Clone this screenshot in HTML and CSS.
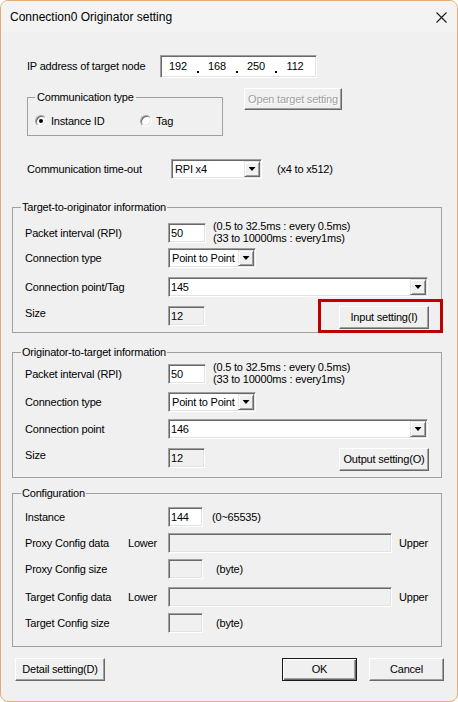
FILE: index.html
```html
<!DOCTYPE html>
<html>
<head>
<meta charset="utf-8">
<title>Connection0 Originator setting</title>
<link rel="stylesheet" href="styles.css">
</head>
<body>
<div class="window">
  <div class="titlebar">
    <span class="title">Connection0 Originator setting</span>
    <svg class="close" width="11" height="11" viewBox="0 0 11 11"><path d="M0.5 0.5L10.5 10.5M10.5 0.5L0.5 10.5" stroke="#1a1a1a" stroke-width="1.1" fill="none"/></svg>
  </div>
  <div class="content">
    <div class="row ip-row">
      <span class="ip-lbl">IP address of target node</span>
      <div class="field ip">
        <span class="oct">192</span><span class="dot"></span>
        <span class="oct">168</span><span class="dot"></span>
        <span class="oct">250</span><span class="dot"></span>
        <span class="oct">112</span>
      </div>
    </div>

    <div class="row ctype-row">
      <div class="group ctype">
        <span class="legend">Communication type</span>
        <div class="radios">
          <span class="radio-item first"><span class="radio checked"></span>Instance ID</span>
          <span class="radio-item"><span class="radio"></span>Tag</span>
        </div>
      </div>
      <div class="btn open-btn">Open target setting</div>
    </div>

    <div class="row timeout-row">
      <span class="timeout-lbl">Communication time-out</span>
      <div class="combo timeout-combo"><span class="val">RPI x4</span><span class="arrow"></span></div>
      <span class="hint">(x4 to x512)</span>
    </div>

    <div class="group info to">
      <span class="legend">Target-to-originator information</span>
      <div class="g-row mt9">
        <span class="g-lbl">Packet interval (RPI)</span>
        <div class="field txt rpi">50</div>
        <div class="notes">(0.5 to 32.5ms : every 0.5ms)<br>(33 to 10000ms : every1ms)</div>
      </div>
      <div class="g-row mt5">
        <span class="g-lbl">Connection type</span>
        <div class="combo sel-ptp"><span class="val">Point to Point</span><span class="arrow"></span></div>
      </div>
      <div class="g-row mt9">
        <span class="g-lbl">Connection point/Tag</span>
        <div class="combo combo-wide"><span class="val">145</span><span class="arrow"></span></div>
      </div>
      <div class="g-row size-row mt9">
        <span class="g-lbl">Size</span>
        <div class="field txt ro size-box">12</div>
        <div class="hl-wrap">
          <div class="btn act-btn">Input setting(I)</div>
          <div class="hl"></div>
        </div>
      </div>
    </div>

    <div class="group info ot">
      <span class="legend">Originator-to-target information</span>
      <div class="g-row mt5">
        <span class="g-lbl">Packet interval (RPI)</span>
        <div class="field txt rpi">50</div>
        <div class="notes">(0.5 to 32.5ms : every 0.5ms)<br>(33 to 10000ms : every1ms)</div>
      </div>
      <div class="g-row mt8">
        <span class="g-lbl">Connection type</span>
        <div class="combo sel-ptp"><span class="val">Point to Point</span><span class="arrow"></span></div>
      </div>
      <div class="g-row mt7">
        <span class="g-lbl">Connection point</span>
        <div class="combo combo-wide"><span class="val">146</span><span class="arrow"></span></div>
      </div>
      <div class="g-row size-row mt9">
        <span class="g-lbl">Size</span>
        <div class="field txt ro size-box">12</div>
        <div class="hl-wrap">
          <div class="btn act-btn">Output setting(O)</div>
        </div>
      </div>
    </div>

    <div class="group info cfg">
      <span class="legend">Configuration</span>
      <div class="g-row mt7">
        <span class="g-lbl">Instance</span>
        <div class="field txt inst">144</div>
        <span class="range">(0~65535)</span>
      </div>
      <div class="g-row mt6">
        <span class="g-lbl cfg-lbl"><span class="main">Proxy Config data</span><span>Lower</span></span>
        <div class="field ro cfg-data"></div>
        <span class="upper">Upper</span>
      </div>
      <div class="g-row mt6">
        <span class="g-lbl">Proxy Config size</span>
        <div class="field ro cfg-size"></div>
        <span class="byte">(byte)</span>
      </div>
      <div class="g-row mt8">
        <span class="g-lbl cfg-lbl"><span class="main">Target Config data</span><span>Lower</span></span>
        <div class="field ro cfg-data"></div>
        <span class="upper">Upper</span>
      </div>
      <div class="g-row mt6">
        <span class="g-lbl">Target Config size</span>
        <div class="field ro cfg-size"></div>
        <span class="byte">(byte)</span>
      </div>
    </div>

    <div class="bottom">
      <div class="btn detail">Detail setting(D)</div>
      <div class="btn default ok">OK</div>
      <div class="btn cancel">Cancel</div>
    </div>
  </div>
</div>
</body>
</html>
```

FILE: styles.css
```css
* { box-sizing: border-box; }
html, body { margin: 0; padding: 0; background: #fff; }
body {
  font-family: "Liberation Sans", Arial, sans-serif;
  font-size: 11px;
  line-height: 13px;
  letter-spacing: -0.2px;
  color: #000;
}
.window {
  width: 458px;
  height: 702px;
  border: 1px solid #e5ab73;
  border-radius: 8px;
  overflow: hidden;
  background: #f0f0f0;
}
.titlebar {
  height: 31px;
  background: #f3f3f3;
  display: flex;
  align-items: center;
  justify-content: space-between;
  padding: 0 10px 0 9px;
}
.title { font-size: 12px; letter-spacing: 0; line-height: 16px; margin-top: 1px; }
.close { display: block; margin-top: 1px; }

.content { display: flex; flex-direction: column; align-items: flex-start; }
.row { display: flex; align-items: center; }

/* sunken 3D edit field */
.field {
  background: #fff;
  border: 1px solid;
  border-color: #a0a0a0 #fff #fff #a0a0a0;
  box-shadow: inset 1px 1px 0 #696969, inset -1px -1px 0 #e3e3e3;
}
.ro { background: #f0f0f0; }

.ip-row { margin: 23px 0 0 26px; }
.ip-lbl { width: 133px; }
.ip { width: 157px; height: 23px; display: flex; align-items: stretch; padding-left: 3px; }
.oct { width: 28px; display: flex; align-items: center; justify-content: center; }
.dot { width: 11px; display: flex; align-items: flex-end; justify-content: center; padding-bottom: 4px; }
.dot::before { content: ""; width: 2px; height: 2px; background: #000; }

.group { border: 1px solid #a0a0a0; }
.legend {
  display: block;
  width: max-content;
  margin-top: -7px;
  background: #f0f0f0;
  line-height: 13px;
}

.ctype-row { margin: 10px 0 0 26px; align-items: flex-start; }
.ctype { width: 196px; margin-top: 9px; padding: 0 0 7px 7px; }
.ctype .legend { padding: 0 2px; }
.radios { display: flex; align-items: center; height: 14px; margin-top: 10px; }
.radio-item { display: flex; align-items: center; }
.radio-item.first { width: 105px; }
.radio {
  width: 12px;
  height: 12px;
  border-radius: 50%;
  border: 1px solid;
  border-color: #a0a0a0 #fff #fff #a0a0a0;
  box-shadow: inset 1px 1px 0 #696969, inset -1px -1px 0 #e3e3e3;
  background: #fff;
  margin-right: 4px;
  display: flex;
  align-items: center;
  justify-content: center;
}
.radio.checked::after { content: ""; width: 4px; height: 4px; border-radius: 50%; background: #000; }

.btn {
  background: #f0f0f0;
  border: 1px solid;
  border-color: #fff #696969 #696969 #fff;
  box-shadow: inset -1px -1px 0 #a0a0a0;
  height: 23px;
  display: flex;
  align-items: center;
  justify-content: center;
  white-space: nowrap;
}
.btn.default {
  border: 1px solid #1a1a1a;
  box-shadow: inset 1px 1px 0 #fff, inset -1px -1px 0 #696969, inset -2px -2px 0 #a0a0a0;
}
.open-btn { width: 98px; height: 22px; margin-left: 21px; color: #a0a0a0; text-shadow: 1px 1px 0 #fff; }

.combo {
  background: #fff;
  border: 1px solid;
  border-color: #a0a0a0 #fff #fff #a0a0a0;
  box-shadow: inset 1px 1px 0 #696969, inset -1px -1px 0 #e3e3e3;
  height: 20px;
  padding: 1px;
  display: flex;
  align-items: stretch;
}
.combo .val { flex: 1; display: flex; align-items: center; padding-left: 1px; white-space: nowrap; overflow: hidden; }
.arrow {
  flex: none;
  width: 16px;
  background: #f0f0f0;
  border: 1px solid;
  border-color: #e3e3e3 #696969 #696969 #e3e3e3;
  box-shadow: inset 1px 1px 0 #fff, inset -1px -1px 0 #a0a0a0;
  display: flex;
  align-items: center;
  justify-content: center;
}
.arrow::before { content: ""; width: 7px; height: 4px; background: #000; clip-path: polygon(0 0, 100% 0, 50% 100%); }

.timeout-row { margin: 23px 0 0 26px; }
.timeout-lbl { width: 144px; }
.timeout-combo { width: 91px; }
.timeout-combo .val { padding-left: 2px; }
.hint { margin-left: 15px; }

.info { width: 430px; margin-left: 11px; padding: 0 12px 3px 12px; }
.info .legend { margin-left: -4px; padding: 0 1px; }
.to { margin-top: 28px; }
.ot { margin-top: 19px; padding-bottom: 6px; }
.cfg { margin-top: 15px; padding-bottom: 13px; }

.g-row { display: flex; align-items: center; height: 20px; }
.g-lbl { width: 143px; flex: none; }
.mt5 { margin-top: 5px; }
.mt6 { margin-top: 6px; }
.mt7 { margin-top: 7px; }
.mt8 { margin-top: 8px; }
.mt9 { margin-top: 9px; }

.txt { height: 20px; padding-left: 2px; display: flex; align-items: center; }
.rpi { width: 38px; }
.notes { margin-left: 7px; line-height: 12px; margin-bottom: 2px; white-space: nowrap; }
.sel-ptp { width: 88px; }
.sel-ptp .val { padding-left: 2px; }
.combo-wide { width: 260px; }
.size-row { align-items: flex-start; height: 23px; }
.size-row .g-lbl { line-height: 15px; }
.size-box { width: 37px; }
.hl-wrap { margin-left: auto; position: relative; display: flex; }
.act-btn { width: 90px; }
.hl {
  position: absolute;
  left: -21px;
  top: -7px;
  right: -14px;
  bottom: -4px;
  border: 3px solid #c00000;
}

.inst { width: 35px; }
.range { margin-left: 9px; }
.cfg-lbl { display: flex; }
.cfg-lbl .main { width: 103px; }
.cfg-data { width: 224px; height: 20px; }
.upper { margin-left: 7px; }
.cfg-size { width: 35px; height: 20px; }
.byte { margin-left: 13px; }

.bottom { align-self: stretch; display: flex; margin-top: 11px; padding: 0 13px 0 14px; }
.detail { width: 90px; }
.ok { width: 75px; margin-left: auto; }
.cancel { width: 75px; margin-left: 12px; }
```
